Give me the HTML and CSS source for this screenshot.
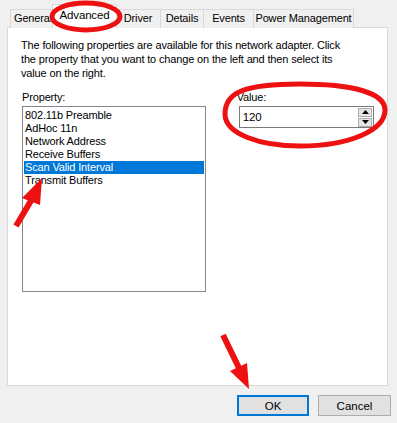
FILE: index.html
```html
<!DOCTYPE html>
<html lang="en">
<head>
  <meta charset="UTF-8">
  <title>Adapter Properties - Advanced</title>
  <link rel="stylesheet" href="styles.css">
</head>
<body>
  <div class="tabs">
    <div class="tab tab-general">General</div>
    <div class="tab tab-advanced active">Advanced</div>
    <div class="tab tab-driver">Driver</div>
    <div class="tab tab-details">Details</div>
    <div class="tab tab-events">Events</div>
    <div class="tab tab-power">Power Management</div>
  </div>

  <div class="panel">
    <p class="intro">The following properties are available for this network adapter. Click<br>
      the property that you want to change on the left and then select its<br>
      value on the right.</p>

    <div class="columns">
      <div class="col-property">
        <div class="label">Property:</div>
        <div class="listbox">
          <div class="item">802.11b Preamble</div>
          <div class="item">AdHoc 11n</div>
          <div class="item">Network Address</div>
          <div class="item">Receive Buffers</div>
          <div class="item selected">Scan Valid Interval</div>
          <div class="item">Transmit Buffers</div>
        </div>
      </div>
      <div class="col-value">
        <div class="label">Value:</div>
        <div class="spinbox">
          <span class="spin-value">120</span>
          <div class="spin-buttons">
            <div class="spin-btn">
              <svg width="7" height="4" viewBox="0 0 7 4"><path d="M3.5 0 L7 4 L0 4 Z" fill="#000"/></svg>
            </div>
            <div class="spin-btn">
              <svg width="7" height="4" viewBox="0 0 7 4"><path d="M0 0 L7 0 L3.5 4 Z" fill="#000"/></svg>
            </div>
          </div>
        </div>
      </div>
    </div>
  </div>

  <div class="buttons">
    <button class="btn btn-default">OK</button>
    <button class="btn">Cancel</button>
  </div>

  <!-- red annotations drawn on top of the screenshot -->
  <svg class="marks" width="397" height="423" viewBox="0 0 397 423">
    <ellipse cx="86" cy="16.5" rx="34" ry="13.5" fill="none" stroke="#ee1111" stroke-width="5"/>
    <path d="M225 114 C225 92 245 84 300 84 C350 84 385 92 385 110 C385 130 350 146 300 146 C260 146 225 134 225 114 Z" fill="none" stroke="#ee1111" stroke-width="5"/>
    <line x1="16" y1="226" x2="32" y2="199" stroke="#ee1111" stroke-width="6"/>
    <polygon points="42,178 22,198 40,205" fill="#ee1111"/>
    <line x1="223" y1="335" x2="239" y2="368" stroke="#ee1111" stroke-width="6"/>
    <polygon points="249,389 230,371 247,363" fill="#ee1111"/>
  </svg>
</body>
</html>
```

FILE: styles.css
```css
* {
  box-sizing: border-box;
}
body {
  margin: 0;
  width: 397px;
  height: 423px;
  background: #f0f0f0;
  font-family: 'Liberation Sans', Arial, sans-serif;
  font-size: 11px;
  letter-spacing: -0.15px;
  color: #000;
  position: relative;
  overflow: hidden;
}
.tabs {
  display: flex;
  align-items: flex-end;
  height: 28px;
  padding-left: 10px;
  position: relative;
  z-index: 1;
}
.tab {
  height: 19px;
  line-height: 17px;
  border: 1px solid #d9d9d9;
  border-bottom: none;
  border-right: none;
  background: #f0f0f0;
  text-align: center;
  white-space: nowrap;
  overflow: hidden;
}
.tab-general { width: 44px; text-align: left; padding-left: 3px; }
.tab-advanced { width: 65px; }
.tab-driver { width: 45px; }
.tab-details { width: 43px; }
.tab-events { width: 50px; }
.tab-power { width: 101px; border-right: 1px solid #d9d9d9; }
.tab.active {
  height: 24px;
  line-height: 20px;
  margin: 0 -2px;
  background: #fff;
  border-right: 1px solid #d9d9d9;
  position: relative;
  z-index: 2;
  font-size: 11.5px;
}
.panel {
  margin: -1px 9px 0 7px;
  height: 359px;
  background: #fff;
  border: 1px solid #d9d9d9;
  padding: 10px 13px 0 13px;
}
.intro {
  margin: 0;
  line-height: 14px;
}
.columns {
  display: flex;
  margin-top: 10px;
}
.label {
  line-height: 14px;
  height: 16px;
}
.col-property {
  width: 186px;
  margin-left: 1px;
}
.listbox {
  height: 186px;
  border: 1px solid #828790;
  padding: 2px 1px;
}
.item {
  height: 13px;
  line-height: 13px;
  padding-left: 1px;
  white-space: nowrap;
}
.item.selected {
  background: #0078d7;
  color: #fff;
}
.col-value {
  margin-left: 31px;
  width: 139px;
}
.spinbox {
  margin-left: 2px;
  height: 22px;
  border: 1px solid #7a7a7a;
  display: flex;
  align-items: center;
  justify-content: space-between;
  padding: 0 1px 0 3px;
  font-size: 11.5px;
}
.spin-buttons {
  display: flex;
  flex-direction: column;
  gap: 1px;
}
.spin-btn {
  width: 14px;
  height: 9px;
  border: 1px solid #adadad;
  background: #e5e5e5;
  display: flex;
  align-items: center;
  justify-content: center;
}
.buttons {
  display: flex;
  justify-content: flex-end;
  gap: 9px;
  padding-right: 6px;
  margin-top: 9px;
}
.btn {
  font-family: 'Liberation Sans', Arial, sans-serif;
  font-size: 11.5px;
  height: 21px;
  width: 73px;
  background: #e1e1e1;
  border: 1px solid #adadad;
  padding: 0;
  color: #000;
}
.btn-default {
  width: 72px;
  border: 2px solid #0078d7;
}
.marks {
  position: absolute;
  top: 0;
  left: 0;
  pointer-events: none;
  z-index: 5;
}
```
